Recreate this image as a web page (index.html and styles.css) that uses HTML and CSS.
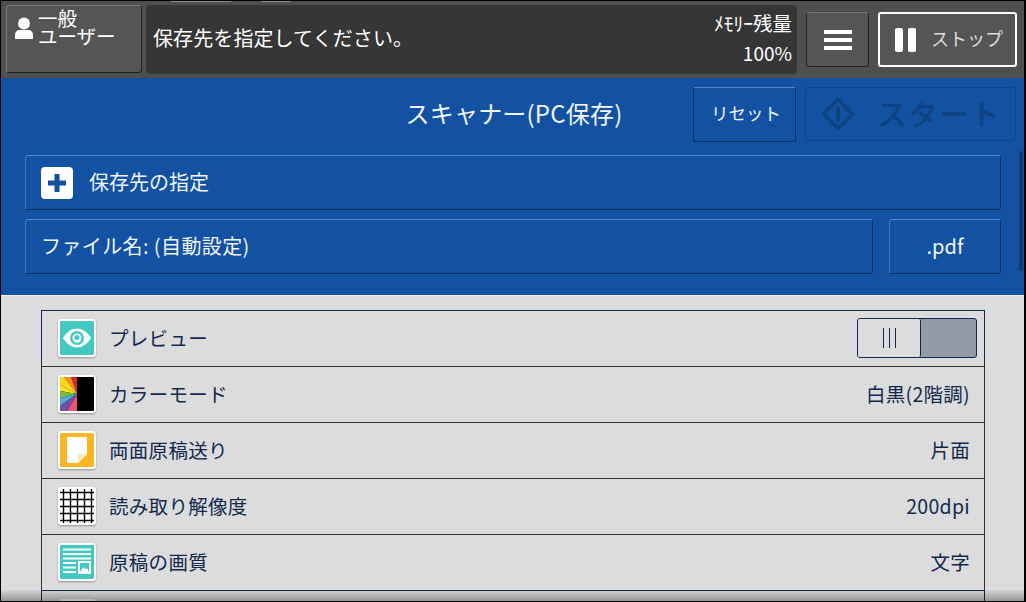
FILE: index.html
```html
<!DOCTYPE html>
<html lang="ja">
<head>
  <meta charset="UTF-8" />
  <title>スキャナー(PC保存)</title>
  <link rel="stylesheet" href="styles.css">
</head>
<body>
  <div class="screen">
    <header class="status-bar">
      <div class="tick-row"><span class="tick tick-a"></span><span class="tick tick-b"></span></div>
      <button class="user-btn">
        <svg class="user-icon" width="20" height="24" viewBox="0 0 20 24">
          <circle cx="10" cy="6.500" r="6" fill="#fff"/>
          <path d="M1 22v-4c0-3 2-5 5-5h8c3 0 5 2 5 5v4z" fill="#fff"/>
        </svg>
        <span class="user-label"><span class="user-line">一般</span><span class="user-line">ユーザー</span></span>
      </button>
      <div class="message">
        <span class="message-text">保存先を指定してください。</span>
        <div class="memory">
          <span class="memory-label">ﾒﾓﾘｰ残量</span>
          <span class="memory-value">100%</span>
        </div>
      </div>
      <button class="menu-btn">
        <span class="menu-line"></span><span class="menu-line"></span><span class="menu-line"></span>
      </button>
      <button class="stop-btn">
        <span class="pause"><i></i><i></i></span>
        <span class="stop-label">ストップ</span>
      </button>
    </header>

    <section class="scan-panel">
      <div class="title-row">
        <h1 class="title">スキャナー(PC保存)</h1>
        <button class="reset-btn">リセット</button>
        <button class="start-btn">
          <svg width="34" height="34" viewBox="0 0 34 34">
            <path d="M17 2.500L31.500 17 17 31.500 2.500 17z" fill="none" stroke="#0f437f" stroke-width="3.500"/>
            <path d="M17 10v14" stroke="#0f437f" stroke-width="4"/>
          </svg>
          <span class="start-label">スタート</span>
        </button>
      </div>
      <button class="field dest">
        <span class="plus-box">
          <svg width="18" height="18" viewBox="0 0 18 18"><path d="M9 0v18M0 9h18" stroke="#13519f" stroke-width="5"/></svg>
        </span>
        <span class="field-text">保存先の指定</span>
      </button>
      <div class="file-row">
        <button class="field file-name"><span class="field-text">ファイル名: (自動設定)</span></button>
        <button class="field file-ext"><span class="field-text">.pdf</span></button>
      </div>
      <div class="scroll-thumb"></div>
    </section>

    <section class="settings">
      <ul class="setting-list">
        <li class="setting">
          <span class="icon icon-teal">
            <svg width="32" height="32" viewBox="0 0 32 32">
              <path d="M2 16C6 9.500 11 6.500 16 6.500S26 9.500 30 16c-4 6.500-9 9.500-14 9.500S6 22.500 2 16z" fill="#fff"/>
              <circle cx="16" cy="16" r="7" fill="#43c9c1"/>
              <circle cx="16" cy="16" r="4.500" fill="#fff"/>
              <circle cx="16" cy="15.500" r="2.500" fill="#43c9c1"/>
            </svg>
          </span>
          <span class="setting-name">プレビュー</span>
          <span class="toggle"><span class="toggle-knob"><i></i><i></i><i></i></span></span>
        </li>
        <li class="setting">
          <span class="icon">
            <svg width="34" height="34" viewBox="0 0 34 34">
              <rect width="34" height="34" fill="#000"/>
              <path d="M17 17L11 0h6z" fill="#d8232f"/>
              <path d="M17 17L4 0h7z" fill="#f7941e"/>
              <path d="M17 17L0 8V0h4z" fill="#fcd91f"/>
              <path d="M17 17L0 14V8z" fill="#fde02a"/>
              <path d="M17 17L0 21v-7z" fill="#7ab844"/>
              <path d="M17 17L0 29v-8z" fill="#5aa5d8"/>
              <path d="M17 17L7 34H0v-5z" fill="#6a53a4"/>
              <path d="M17 17v17H7z" fill="#ef4f7b"/>
            </svg>
          </span>
          <span class="setting-name">カラーモード</span>
          <span class="setting-value">白黒(2階調)</span>
        </li>
        <li class="setting">
          <span class="icon icon-amber">
            <svg width="20" height="26" viewBox="0 0 20 26">
              <path d="M0 0h20v17l-9 9H0z" fill="#fff"/>
              <path d="M11 26v-9h9z" fill="#fdeab8"/>
            </svg>
          </span>
          <span class="setting-name">両面原稿送り</span>
          <span class="setting-value">片面</span>
        </li>
        <li class="setting">
          <span class="icon">
            <svg width="34" height="34" viewBox="0 0 34 34">
              <path d="M3.500 0v34M10.500 0v34M17.500 0v34M24.500 0v34M31.500 0v34M0 3.500h34M0 10.500h34M0 17.500h34M0 24.500h34M0 31.500h34" stroke="#000" stroke-width="1.400" fill="none"/>
            </svg>
          </span>
          <span class="setting-name">読み取り解像度</span>
          <span class="setting-value">200dpi</span>
        </li>
        <li class="setting">
          <span class="icon icon-teal">
            <svg width="30" height="30" viewBox="0 0 30 30">
              <path d="M1 2.500h28M1 7h28M1 11.500h28M1 16h13M1 20.500h13M1 25h13" stroke="#fff" stroke-width="1.800"/>
              <rect x="16" y="14" width="13" height="13" fill="#fff"/>
              <rect x="18" y="16" width="9" height="9" fill="#43c9c1"/>
              <path d="M18 25l3.500-5 2 2.500 1.500-1.500 2 4z" fill="#fff"/>
            </svg>
          </span>
          <span class="setting-name">原稿の画質</span>
          <span class="setting-value">文字</span>
        </li>
        <li class="setting"><span class="icon"></span></li>
      </ul>
      <div class="bottom-shade"></div>
    </section>
  </div>
</body>
</html>
```

FILE: styles.css
```css
* {
  box-sizing: border-box;
}
html, body {
  margin: 0;
  padding: 0;
  overflow: hidden;
}
body {
  background: #000;
  font-family: "Noto Sans CJK JP", "Noto Sans", sans-serif;
}
button {
  font-family: inherit;
  padding: 0;
  cursor: pointer;
}
.screen {
  position: relative;
  width: 1026px;
  height: 602px;
  border: solid #000;
  border-width: 1px 2px 1px 1px;
  overflow: hidden;
  display: flex;
  flex-direction: column;
}

/* top bar */
.status-bar {
  position: relative;
  height: 77px;
  flex: none;
  background: #4f4f4f;
  display: flex;
  align-items: flex-start;
  padding: 4px 7px 0 5px;
}
.tick-row {
  position: absolute;
  top: 0;
  left: 170px;
  display: flex;
  gap: 30px;
}
.tick {
  display: block;
  height: 1px;
  background: #8a8a8a;
}
.tick-a { width: 60px; }
.tick-b { width: 30px; }
.user-btn {
  width: 136px;
  height: 68px;
  background: #555;
  border: 1px solid #222;
  border-top-color: #777;
  border-left-color: #777;
  border-radius: 3px;
  color: #fff;
  display: flex;
  align-items: flex-start;
  text-align: left;
  padding: 3px 0 0 7px;
}
.user-icon {
  margin-top: 8px;
  margin-right: 4px;
}
.user-label {
  display: block;
  font-size: 19.500px;
}
.user-line {
  display: block;
  height: 18px;
  line-height: 18px;
  white-space: nowrap;
}
.message {
  width: 651px;
  height: 69px;
  margin-left: 4px;
  background: #363636;
  border-radius: 4px;
  color: #fff;
  display: flex;
  align-items: center;
  justify-content: space-between;
  padding: 0 5px 0 7px;
}
.message-text {
  font-size: 20px;
  letter-spacing: 0.100px;
  line-height: 30px;
  margin-bottom: 3px;
}
.memory {
  display: flex;
  flex-direction: column;
  align-items: flex-end;
  margin-bottom: 4px;
}
.memory-label {
  font-size: 19.500px;
  line-height: 30px;
  white-space: nowrap;
}
.memory-value {
  font-size: 19px;
  line-height: 30px;
}
.menu-btn {
  width: 63px;
  height: 55px;
  margin: 7px 0 0 9px;
  background: #555;
  border: 1px solid #222;
  border-top-color: #777;
  border-radius: 3px;
  display: flex;
  flex-direction: column;
  align-items: center;
  justify-content: center;
  gap: 4px;
}
.menu-line {
  display: block;
  width: 28px;
  height: 4px;
  background: #fff;
}
.stop-btn {
  width: 139px;
  height: 55px;
  margin: 7px 0 0 9px;
  background: #555;
  border: 2px solid #fff;
  border-radius: 3px;
  color: #ddd;
  font-size: 18px;
  display: flex;
  align-items: center;
  padding-left: 15px;
  gap: 15px;
}
.stop-label {
  margin-bottom: 3px;
}
.pause {
  display: flex;
  gap: 5px;
}
.pause i {
  display: block;
  width: 8px;
  height: 24px;
  background: #fff;
  border-radius: 2px;
}

/* blue panel */
.scan-panel {
  position: relative;
  height: 217px;
  flex: none;
  background: #1351a3;
  padding: 9px 0 0 24px;
}
.title-row {
  display: flex;
  align-items: center;
  height: 54px;
  margin-bottom: 14px;
}
.title {
  width: 668px;
  margin: 0 0 3px;
  padding-left: 310px;
  text-align: center;
  font-size: 24px;
  font-weight: 400;
  letter-spacing: 0.200px;
  color: #f2f5fa;
  white-space: nowrap;
}
.reset-btn {
  width: 103px;
  height: 55px;
  background: #1351a3;
  border: 1px solid #0e2c55;
  border-top-color: #5e84bb;
  border-radius: 2px;
  color: #eef2f8;
  font-size: 17.500px;
  padding: 0 0 3px 3px;
}
.start-btn {
  width: 211px;
  height: 54px;
  margin-left: 9px;
  background: #1351a3;
  border: 1px solid #0f4488;
  border-radius: 3px;
  color: #0f437f;
  font-size: 30px;
  font-weight: 500;
  letter-spacing: 1px;
  display: flex;
  align-items: center;
  gap: 22px;
  padding-left: 15px;
}
.start-label {
  margin-bottom: 4px;
}
.field {
  height: 55px;
  background: #1351a3;
  border: 1px solid #0e2c55;
  border-top-color: #5e84bb;
  border-left-color: #4a76b2;
  border-radius: 3px;
  color: #f2f5fa;
  font-size: 20px;
  display: flex;
  align-items: center;
}
.field-text {
  margin-bottom: 3px;
}
.dest {
  width: 976px;
  padding-left: 15px;
  gap: 16px;
}
.plus-box {
  width: 32px;
  height: 32px;
  background: #fff;
  border-radius: 4px;
  display: flex;
  align-items: center;
  justify-content: center;
}
.file-row {
  display: flex;
  gap: 16px;
  margin-top: 9px;
}
.file-name {
  width: 848px;
  padding-left: 15px;
  letter-spacing: 0.400px;
}
.file-ext {
  width: 112px;
  justify-content: center;
}
.scroll-thumb {
  position: absolute;
  top: 73px;
  right: 1px;
  width: 4px;
  height: 120px;
  border-radius: 2px;
  background: #0e3a78;
}

/* settings list */
.settings {
  position: relative;
  flex: 1;
  background: #dcdcdc;
  border-top: 1px solid #f2f2f2;
  padding: 14px 0 0 40px;
  overflow: hidden;
}
.setting-list {
  list-style: none;
  margin: 0;
  padding: 0;
  width: 944px;
  border-top: 1px solid #0e2a52;
}
.setting {
  height: 56px;
  border: solid #333;
  border-width: 0 1px 1px;
  display: flex;
  align-items: center;
  padding: 0 14px 2px 16px;
  color: #12294f;
  font-size: 19.500px;
  letter-spacing: 0.300px;
}
.setting:first-child {
  border-left-color: #0e2a52;
  border-right-color: #0e2a52;
}
.setting:nth-child(5) {
  border-bottom-color: #0e2a52;
}
.setting:last-child {
  border-left-color: #0e2a52;
  border-right-color: #0e2a52;
}
.icon {
  width: 38px;
  height: 38px;
  flex: none;
  background: #fff;
  border: 2px solid #fff;
  border-radius: 3px;
  box-shadow: 0 1px 2px rgba(0, 0, 0, 0.35);
  display: flex;
  align-items: center;
  justify-content: center;
  overflow: hidden;
}
.icon-teal {
  background: #43c9c1;
}
.icon-amber {
  background: #fbb625;
}
.setting-name {
  margin-left: 13px;
  margin-bottom: 1px;
}
.setting-value {
  margin-left: auto;
  margin-bottom: 1px;
}
.toggle {
  width: 120px;
  height: 40px;
  margin-left: auto;
  margin-right: -7px;
  background: #929ca8;
  border: 1px solid #0e2a52;
  border-radius: 3px;
  display: flex;
}
.toggle-knob {
  width: 63px;
  background: #dcdcdc;
  border-right: 1px solid #0e2a52;
  border-radius: 2px;
  display: flex;
  align-items: center;
  justify-content: center;
  gap: 5px;
}
.toggle-knob i {
  display: block;
  width: 1px;
  height: 20px;
  background: #0e2a52;
}
.bottom-shade {
  position: absolute;
  left: 0;
  right: 0;
  bottom: 0;
  height: 11px;
  background: linear-gradient(rgba(0, 0, 0, 0.04), rgba(0, 0, 0, 0.32));
}
```
